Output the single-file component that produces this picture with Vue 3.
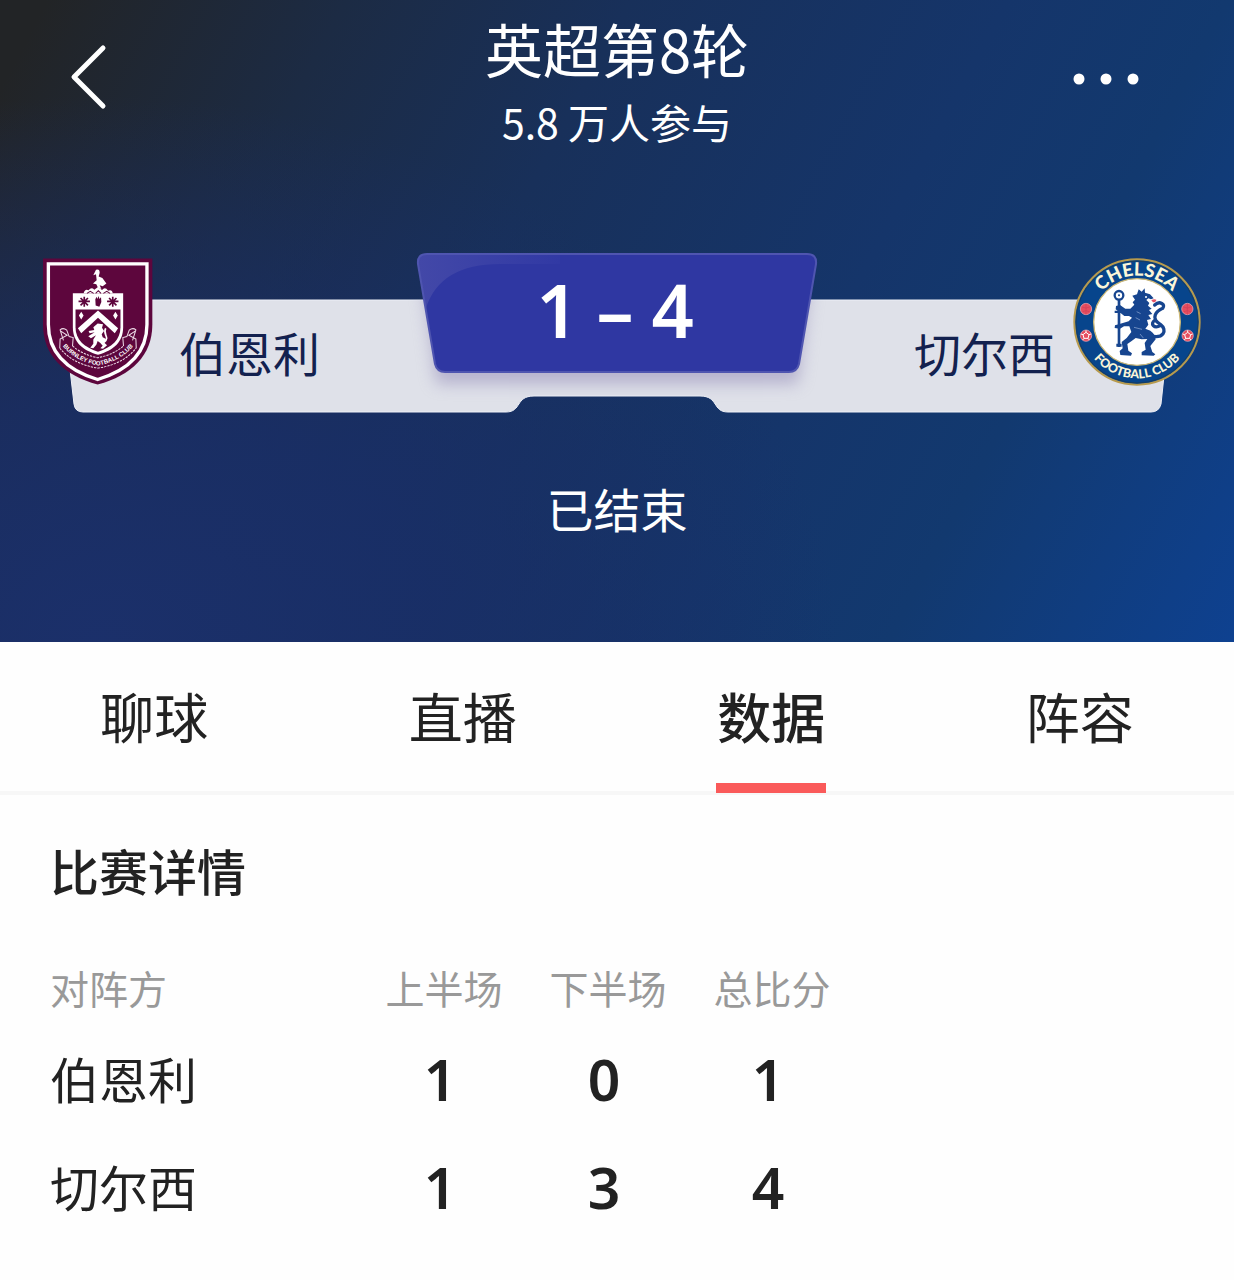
<script setup>
import { ref } from 'vue';

const tabs = ['聊球', '直播', '数据', '阵容'];
const active = ref('数据');

const rows = [
  { team: '伯恩利', first: 1, second: 0, total: 1 },
  { team: '切尔西', first: 1, second: 3, total: 4 },
];
</script>

<template>
  <div class="page">
    <header class="hero">
      <div class="nav">
        <button class="icon-btn" type="button" aria-label="返回">
          <svg class="icon" viewBox="0 0 72 72">
            <path d="M51 8 L22 37 L51 66" fill="none" stroke="#fff" stroke-width="5" stroke-linecap="round" stroke-linejoin="round" />
          </svg>
        </button>
        <div class="title">
          <h1>英超第8轮</h1>
          <p>5.8 万人参与</p>
        </div>
        <button class="icon-btn" type="button" aria-label="更多">
          <svg class="icon" viewBox="0 0 72 72" fill="#fff">
            <circle cx="9" cy="39" r="5.5" />
            <circle cx="36" cy="39" r="5.5" />
            <circle cx="63" cy="39" r="5.5" />
          </svg>
        </button>
      </div>

      <div class="board">
        <!-- 比分牌底板 -->
        <svg class="board-bg" viewBox="0 0 1234 170" preserveAspectRatio="none">
          <defs>
            <filter id="plateShadow" x="-10%" y="-10%" width="120%" height="150%">
              <feGaussianBlur stdDeviation="8" />
            </filter>
            <clipPath id="plateClip">
              <path d="M62 50 H1172 L1161 154 Q1159 162 1151 162 H728 C712 162 719 146 700 146 H534 C515 146 522 162 506 162 H83 Q75 162 74 154 Z" />
            </clipPath>
            <clipPath id="scoreClip">
              <path d="M427 4 H807 Q817 4 816 14 L799 114 Q797 122 789 122 H445 Q437 122 435 114 L418 14 Q417 4 427 4 Z" />
            </clipPath>
            <linearGradient id="shine" x1="0" x2="1">
              <stop offset="0" stop-color="#4449a8" />
              <stop offset="1" stop-color="#3139a4" />
            </linearGradient>
          </defs>
          <path d="M62 50 H1172 L1161 154 Q1159 162 1151 162 H728 C712 162 719 146 700 146 H534 C515 146 522 162 506 162 H83 Q75 162 74 154 Z" fill="#dfe1e9" stroke="#eef0f7" />
          <g clip-path="url(#plateClip)">
            <path d="M422 22 H812 L798 134 H436 Z" fill="#8d84b4" opacity="0.5" filter="url(#plateShadow)" />
          </g>
          <g clip-path="url(#scoreClip)">
            <rect x="410" width="414" height="130" fill="#2f37a2" />
            <path d="M410 0 H560 V14 H500 Q440 14 426 58 L410 60 Z" fill="url(#shine)" />
          </g>
          <path d="M427 4 H807 Q817 4 816 14 L799 114 Q797 122 789 122 H445 Q437 122 435 114 L418 14 Q417 4 427 4 Z" fill="none" stroke="#4f55b0" stroke-width="2" />
        </svg>

        <div class="team">
          <svg class="burnley" viewBox="40 40 328 378">
            <path d="M40 41 H366 V238 C366 330 305 389 203 417 C101 389 40 330 40 238 Z" fill="#5d063d" />
            <path d="M56 57 H350 V238 C350 321 295 374 203 402 C111 374 56 321 56 238 Z" fill="none" stroke="#fff" stroke-width="10" />
            <!-- 盾徽 -->
            <path d="M129 145 H279 V246 C279 290 250 315 204 328 C158 315 129 290 129 246 Z" fill="#fff" />
            <path d="M137 193 H271 V246 C271 284 244 306 204 319 C164 306 137 284 137 246 Z" fill="#5d063d" />
            <path d="M204 196 L264 249 L254 264 L204 218 L154 264 L144 249 Z" fill="#fff" />
            <path d="M154 200 l7 11 -7 12 -7 -12z M256 200 l7 11 -7 12 -7 -12z" fill="#fff" />
            <g stroke="#5d063d" stroke-width="5">
              <path d="M146 169 H180 M152 159 L174 181 M174 159 L152 181 M163 155 V185" />
              <path d="M231 169 H265 M237 159 L259 181 M259 159 L237 181 M248 155 V185" />
            </g>
            <path d="M197 181 L196 163 L200 155 L202 162 L206 153 L208 162 L213 157 L214 171 L208 185 Z" fill="#5d063d" />
            <!-- 小狮子 -->
            <path d="M190 246 L203 235 L219 237 L216 248 L222 257 L215 267 L218 276 L228 281 L223 292 L231 300 L219 310 L211 309 L218 301 L211 293 L203 287 L199 298 L190 309 L181 307 L190 295 L190 283 L198 270 L183 279 L175 273 L194 261 L179 264 L176 257 L193 254 Z" fill="#fff" />
            <path d="M222 291 C242 276 216 267 227 249" fill="none" stroke="#fff" stroke-width="5" />
            <!-- 鹤 -->
            <path d="M161 145 Q165 130 176 136 Q184 125 193 134 L204 126 L216 135 Q225 124 234 137 Q246 132 248 145 Z" fill="#fff" />
            <path d="M204 128 L199 118 L189 116 L200 106 L198 88 L190 91 L198 75 Q209 71 209 84 L206 95 L217 99 L229 116 L218 124 L209 121 L214 132 Z" fill="#fff" />
            <path d="M171 145 L181 139 L191 145 M197 145 L205 137 L213 145 M220 145 L230 139 L240 145" fill="none" stroke="#5d063d" stroke-width="3" />
            <!-- 绶带 -->
            <g fill="none" stroke="#efdfea" stroke-width="3">
              <path d="M128 302 Q160 329 204 337 Q248 329 280 302" stroke-dasharray="7 3" />
              <path d="M90 308 Q128 356 204 368 Q280 356 318 308" stroke-dasharray="7 3" />
              <path d="M101 285 L91 254 Q100 246 111 255 L118 274 L130 277 L128 302 M92 257 L112 270 L91 281 L90 308" />
              <path d="M307 285 L317 254 Q308 246 297 255 L290 274 L278 277 L280 302 M316 257 L296 270 L317 281 L318 308" />
            </g>
            <path id="burnleyArc" d="M99 303 Q139 349 204 360 Q269 349 309 303" fill="none" />
            <text class="burnley-text" text-anchor="middle">
              <textPath href="#burnleyArc" startOffset="50%">BURNLEY FOOTBALL CLUB</textPath>
            </text>
          </svg>
          <span class="team-name">伯恩利</span>
        </div>

        <div class="score"><span>1</span><span>–</span><span>4</span></div>

        <div class="team away">
          <span class="team-name">切尔西</span>
          <svg class="chelsea" viewBox="38 36 384 384">
            <circle cx="230" cy="228" r="188" fill="#07458c" stroke="#b79a4d" stroke-width="6" />
            <circle cx="230" cy="228" r="183" fill="none" stroke="#173d63" stroke-width="3" />
            <circle cx="230" cy="228" r="130" fill="#fff" stroke="#cdb875" stroke-width="4" />
            <!-- 持杖狮子 -->
            <g fill="#17458f">
              <path d="M216 149 L230 145 L235 130 L244 137 L253 127 L254 140 L269 145 L280 157 L272 160 L264 157 L258 162 L267 171 L263 179 L274 188 L266 192 L276 204 L264 207 L272 219 L260 222 L264 236 L255 248 L270 254 Q286 266 286 280 L270 300 L276 318 L285 325 L280 329 L244 328 L244 318 L256 311 L253 291 L261 279 L244 280 L226 276 L214 285 L201 294 L204 314 L215 322 L212 329 L180 327 L178 315 L187 307 L184 288 L199 276 L213 258 L207 241 L191 241 L179 248 L163 246 L164 238 L175 235 L205 226 L215 215 L206 210 L192 210 L176 197 L166 190 L167 180 L179 177 L195 188 L210 188 L222 176 L217 169 L224 161 Z" />
              <rect x="172" y="161" width="8" height="142" />
              <path d="M163 194 H186 V201 H163 Z M168 293 H184 V302 H168 Z" />
            </g>
            <circle cx="176" cy="148" r="13" fill="none" stroke="#17458f" stroke-width="7" />
            <circle cx="176" cy="148" r="3" fill="#17458f" />
            <path d="M262 267 C313 284 321 251 301 236 C267 216 290 194 307 187 C317 175 298 163 283 177 M284 222 C267 234 282 249 300 239" fill="none" stroke="#17458f" stroke-width="10" stroke-linecap="round" />
            <path d="M226 215 L239 222 M221 244 L245 250 M229 197 L241 203 M239 264 L249 276" stroke="#6d8cc0" stroke-width="3" />
            <path d="M254 153 h6" stroke="#fff" stroke-width="4" />
            <path d="M273 163 Q280 158 288 161 Q287 169 278 169 Z" fill="#e65366" />
            <!-- 足球与玫瑰 -->
            <g fill="#e64e60" stroke="#f1b3bc" stroke-width="2">
              <circle cx="77" cy="189" r="17" />
              <circle cx="381" cy="189" r="17" />
              <circle cx="77" cy="269" r="17" />
              <circle cx="382" cy="269" r="17" />
            </g>
            <g fill="none" stroke="#cf4058" stroke-width="2">
              <path d="M65 183 Q77 190 90 182 M67 197 Q78 190 88 198 M77 173 V206 M369 183 Q381 190 394 182 M371 197 Q382 190 392 198 M381 173 V206" />
            </g>
            <g fill="none" stroke="#fff" stroke-width="3">
              <path d="M77 259 L86 266 L83 277 H71 L68 266 Z M77 259 V253 M86 266 L92 264 M83 277 L87 282 M71 277 L67 282 M68 266 L62 264" />
              <path d="M382 259 L391 266 L388 277 H376 L373 266 Z M382 259 V253 M391 266 L397 264 M388 277 L392 282 M376 277 L372 282 M373 266 L367 264" />
            </g>
            <path id="chelseaTop" d="M91 228 A139 139 0 0 1 369 228" fill="none" />
            <path id="chelseaBottom" d="M61 228 A169 169 0 0 0 399 228" fill="none" />
            <text class="chelsea-top" text-anchor="middle">
              <textPath href="#chelseaTop" startOffset="50%">CHELSEA</textPath>
            </text>
            <text class="chelsea-bottom" text-anchor="middle">
              <textPath href="#chelseaBottom" startOffset="50%">FOOTBALL CLUB</textPath>
            </text>
          </svg>
        </div>
      </div>

      <p class="status">已结束</p>
    </header>

    <nav class="tabs">
      <button
        v-for="tab in tabs"
        :key="tab"
        type="button"
        class="tab"
        :class="{ active: tab === active }"
        @click="active = tab"
      >
        <span>{{ tab }}</span>
      </button>
    </nav>

    <main class="detail">
      <h2>比赛详情</h2>
      <table>
        <thead>
          <tr>
            <th class="name" scope="col">对阵方</th>
            <th scope="col">上半场</th>
            <th scope="col">下半场</th>
            <th scope="col">总比分</th>
          </tr>
        </thead>
        <tbody>
          <tr v-for="row in rows" :key="row.team">
            <th class="name" scope="row">{{ row.team }}</th>
            <td>{{ row.first }}</td>
            <td>{{ row.second }}</td>
            <td>{{ row.total }}</td>
          </tr>
        </tbody>
      </table>
    </main>
  </div>
</template>

<style>
body {
  margin: 0;
  background: #fefefe;
}
</style>

<style scoped>
.page {
  font-family: "Noto Sans CJK SC", sans-serif;
  color: #222;
}

h1,
h2,
p {
  margin: 0;
  font-weight: 400;
}

button {
  padding: 0;
  border: 0;
  background: none;
  font-family: inherit;
  color: inherit;
  cursor: pointer;
}

.hero {
  box-sizing: border-box;
  padding: 8px 0 104px;
  color: #fff;
  background:
    radial-gradient(ellipse 60% 85% at 8% 100%, rgba(27, 48, 108, 0.95), rgba(25, 46, 104, 0.8) 45%, rgba(23, 46, 98, 0) 100%),
    linear-gradient(118deg, #222426 3%, #1c2b44 22%, #18305a 40%, #15356a 64%, #12396f 78%, #0e4190 100%);
}

.nav {
  display: flex;
  justify-content: space-between;
  align-items: flex-start;
  padding: 0 92px 0 52px;
}

.icon-btn {
  width: 72px;
  height: 72px;
  margin-top: 32px;
}

.icon {
  display: block;
  width: 72px;
  height: 72px;
}

.nav .icon-btn:first-child {
  margin-right: 40px;
}

.title {
  text-align: center;
}

.title h1 {
  font-size: 58px;
  line-height: 80px;
}

.title p {
  font-size: 41px;
  line-height: 66px;
}

.board {
  position: relative;
  display: grid;
  grid-template-columns: 1fr auto 1fr;
  height: 170px;
  margin-top: 96px;
  padding: 0 33px 0 43px;
}

.board-bg {
  position: absolute;
  inset: 0;
  width: 100%;
  height: 100%;
}

.team,
.score {
  position: relative;
}

.team {
  display: flex;
  align-items: flex-start;
  gap: 26px;
  padding-top: 8px;
}

.away {
  justify-content: flex-end;
  gap: 18px;
}

.team-name {
  margin-top: 62px;
  font-size: 47px;
  line-height: 64px;
  color: #13214f;
}

.burnley {
  width: 110px;
  height: 127px;
}

.chelsea {
  width: 128px;
  height: 128px;
}

.burnley-text {
  font: 700 18px "Liberation Sans", sans-serif;
  fill: #fff;
}

.chelsea-top {
  font: 900 55px Lato, sans-serif;
  fill: #fbf6d8;
}

.chelsea-bottom {
  font: 900 37px Lato, sans-serif;
  fill: #fbf6d8;
}

.score {
  display: flex;
  justify-content: center;
  gap: 18px;
  padding-right: 14px;
  font-family: "Noto Sans", sans-serif;
  font-size: 74px;
  font-weight: 600;
  line-height: 120px;
}

.status {
  margin-top: 56px;
  font-size: 47px;
  line-height: 64px;
  text-align: center;
}

.hero .status {
  margin-bottom: -2px;
}

.tabs {
  display: grid;
  grid-template-columns: repeat(4, 1fr);
  height: 149px;
  border-bottom: 4px solid #f7f7f7;
}

.tab {
  display: flex;
  justify-content: center;
  font-size: 54px;
  line-height: 148px;
}

.tab span {
  position: relative;
  padding: 0 1px;
}

.tab.active {
  font-weight: 500;
}

.tab.active span::after {
  content: "";
  position: absolute;
  left: 0;
  right: 0;
  top: 141px;
  height: 10px;
  background: #fa5a5a;
}

.detail {
  padding: 39px 50px;
}

h2 {
  font-size: 49px;
  font-weight: 500;
  line-height: 72px;
}

table {
  width: 100%;
  max-width: 804px;
  margin-top: 44px;
  border-collapse: collapse;
  table-layout: fixed;
}

th,
td {
  padding: 0;
  font-weight: 400;
  text-align: center;
}

thead th {
  width: 164px;
  height: 73px;
  font-size: 39px;
  line-height: 72px;
  color: #999;
}

.name {
  text-align: left;
}

thead .name {
  width: auto;
}

tbody th {
  font-size: 49px;
}

tbody td {
  height: 108px;
  padding: 4px 8px 0 0;
  box-sizing: border-box;
  font-family: "Noto Sans", sans-serif;
  font-size: 57px;
  font-weight: 600;
  line-height: 80px;
}
</style>
